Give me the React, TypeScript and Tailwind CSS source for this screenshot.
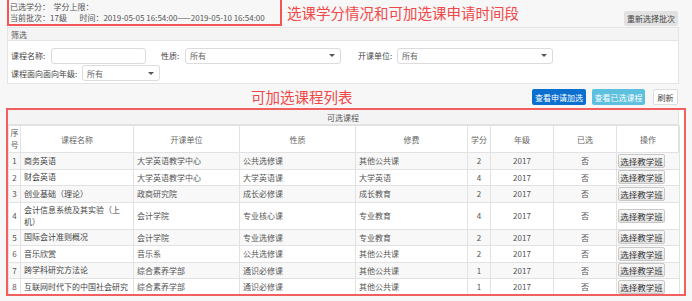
import React from 'react';

interface Course {
  no: number;
  name: string;
  unit: string;
  nature: string;
  category: string;
  credit: number;
  grade: string;
  chosen: string;
}

const courses: Course[] = [
  { no: 1, name: '商务英语', unit: '大学英语教学中心', nature: '公共选修课', category: '其他公共课', credit: 2, grade: '2017', chosen: '否' },
  { no: 2, name: '财会英语', unit: '大学英语教学中心', nature: '大学英语课', category: '大学英语', credit: 4, grade: '2017', chosen: '否' },
  { no: 3, name: '创业基础（理论）', unit: '政商研究院', nature: '成长必修课', category: '成长教育', credit: 2, grade: '2017', chosen: '否' },
  { no: 4, name: '会计信息系统及其实验（上机）', unit: '会计学院', nature: '专业核心课', category: '专业教育', credit: 4, grade: '2017', chosen: '否' },
  { no: 5, name: '国际会计准则概况', unit: '会计学院', nature: '专业选修课', category: '专业教育', credit: 2, grade: '2017', chosen: '否' },
  { no: 6, name: '音乐欣赏', unit: '音乐系', nature: '公共选修课', category: '其他公共课', credit: 2, grade: '2017', chosen: '否' },
  { no: 7, name: '跨学科研究方法论', unit: '综合素养学部', nature: '通识必修课', category: '其他公共课', credit: 1, grade: '2017', chosen: '否' },
  { no: 8, name: '互联网时代下的中国社会研究', unit: '综合素养学部', nature: '通识必修课', category: '其他公共课', credit: 1, grade: '2017', chosen: '否' },
];

const Select = ({ width }: { width: string }) => (
  <div className={`${width} h-[16px] bg-white border border-[#dcdcdc] rounded-[3px] flex items-center justify-between pl-[4px] pr-[5px] text-[#666]`}>
    <span>所有</span>
    <span className="w-0 h-0 border-l-[3px] border-r-[3px] border-t-[3px] border-l-transparent border-r-transparent border-t-[#555]" />
  </div>
);

const App = () => {
  const td = 'border border-[#e2e2e2] px-[3px] whitespace-nowrap';
  return (
    <div
      className="w-[692px] h-[301px] bg-[#f7f7f7] overflow-hidden text-[8px] text-[#444] leading-[11px]"
      style={{ fontFamily: '"Noto Sans CJK SC", "Noto Sans", sans-serif' }}
    >
      {/* Top info */}
      <div className="flex items-start h-[27px]">
        <div className="ml-[7px] w-[275px] h-[26px] border-x-2 border-b-2 border-[#f25555] pl-[1px] pt-[1px] text-[#555] leading-[11px] whitespace-nowrap">
          <div>已选学分：&nbsp;&nbsp;学分上限：</div>
          <div>当前批次：17级&nbsp;&nbsp;&nbsp;&nbsp;&nbsp;&nbsp;&nbsp;时间：2019-05-05 16:54:00——2019-05-10 16:54:00</div>
        </div>
        <div className="ml-[5px] mt-[4px] text-[14.5px] leading-[18px] text-[#f04848]">选课学分情况和可加选课申请时间段</div>
        <button className="ml-auto mr-[14px] mt-[11px] h-[15px] px-[3px] bg-[#e2e2e2] rounded-[2px] text-[8px] text-[#444] leading-[15px]">重新选择批次</button>
      </div>

      {/* Filter */}
      <div className="mx-[7px] w-[672px] border border-[#e4e4e4] bg-white whitespace-nowrap">
        <div className="h-[13px] bg-[#f4f4f4] border-b border-[#e4e4e4] pl-[3px] leading-[13px] text-[#555]">筛选</div>
        <div className="flex items-center h-[23px] pt-[6px] pl-[3px]">
          <span className="w-[40px]">课程名称:</span>
          <div className="w-[95px] h-[16px] border border-[#dcdcdc] rounded-[3px]" />
          <span className="ml-[15px] w-[24px]">性质:</span>
          <Select width="w-[156px]" />
          <span className="ml-[17px] w-[39px]">开课单位:</span>
          <Select width="w-[156px]" />
        </div>
        <div className="flex items-center h-[19px] pl-[3px] pb-[1px]">
          <span className="w-[71px]">课程面向面向年级:</span>
          <Select width="w-[78px]" />
        </div>
      </div>

      {/* Toolbar */}
      <div className="flex items-center h-[24px] pt-[2px]">
        <div className="ml-[251px] text-[14.5px] leading-[18px] text-[#f04848]">可加选课程列表</div>
        <button className="ml-auto h-[16px] w-[54px] bg-[#0b6fcf] text-white rounded-[2px] text-[8px]">查看申请加选</button>
        <button className="ml-[6px] h-[16px] w-[53px] bg-[#5cc0de] text-white rounded-[2px] text-[8px]">查看已选课程</button>
        <button className="ml-[8px] mr-[14px] h-[16px] w-[25px] bg-white border border-[#ddd] rounded-[2px] text-[8px]">刷新</button>
      </div>

      {/* Table */}
      <div className="ml-[6px] w-[680px] h-[188px] border-2 border-[#f25f5f] bg-white pr-[3px] overflow-hidden">
        <div className="w-[671px] border-r border-[#e2e2e2]">
          <div className="h-[15px] bg-[#f4f4f4] text-center leading-[15px] text-[#555] border-b border-[#e2e2e2]">可选课程</div>
          <table className="w-[671px] table-fixed border-collapse text-[#555]">
            <colgroup>
              <col className="w-[12px]" />
              <col className="w-[113px]" />
              <col className="w-[106px]" />
              <col className="w-[116px]" />
              <col className="w-[112px]" />
              <col className="w-[23px]" />
              <col className="w-[63px]" />
              <col className="w-[63px]" />
              <col className="w-[63px]" />
            </colgroup>
            <thead>
              <tr className="h-[27px] text-[#666]">
                <th className="border border-[#e2e2e2] font-normal text-center leading-[12px] px-0">序<br />号</th>
                <th className={`${td} font-normal text-center`}>课程名称</th>
                <th className={`${td} font-normal text-center`}>开课单位</th>
                <th className={`${td} font-normal text-center`}>性质</th>
                <th className={`${td} font-normal text-center`}>修费</th>
                <th className="border border-[#e2e2e2] font-normal text-center px-0 whitespace-nowrap">学分</th>
                <th className={`${td} font-normal text-center`}>年级</th>
                <th className={`${td} font-normal text-center`}>已选</th>
                <th className={`${td} font-normal text-center`}>操作</th>
              </tr>
            </thead>
            <tbody>
              {courses.map((c) => (
                <tr key={c.no} className={`${c.no === 4 ? 'h-[27px]' : 'h-[16.5px]'} ${c.no % 2 === 1 ? 'bg-[#f8f8f8]' : 'bg-white'}`}>
                  <td className="border border-[#e2e2e2] text-center px-0">{c.no}</td>
                  <td className="border border-[#e2e2e2] px-[3px] text-[#444] leading-[12px]">{c.name}</td>
                  <td className={td}>{c.unit}</td>
                  <td className={td}>{c.nature}</td>
                  <td className={td}>{c.category}</td>
                  <td className="border border-[#e2e2e2] text-center px-0">{c.credit}</td>
                  <td className={`${td} text-center`}>{c.grade}</td>
                  <td className={`${td} text-center`}>{c.chosen}</td>
                  <td className="border border-[#e2e2e2] pl-[1px] py-0">
                    <button className="block h-[14px] w-[47px] border border-[#c8c8c8] rounded-[2px] bg-gradient-to-b from-[#f8f8f8] to-[#e2e2e2] text-[8.5px] text-[#333] leading-[12px] whitespace-nowrap">选择教学班</button>
                  </td>
                </tr>
              ))}
            </tbody>
          </table>
        </div>
      </div>
    </div>
  );
};

export default App;
